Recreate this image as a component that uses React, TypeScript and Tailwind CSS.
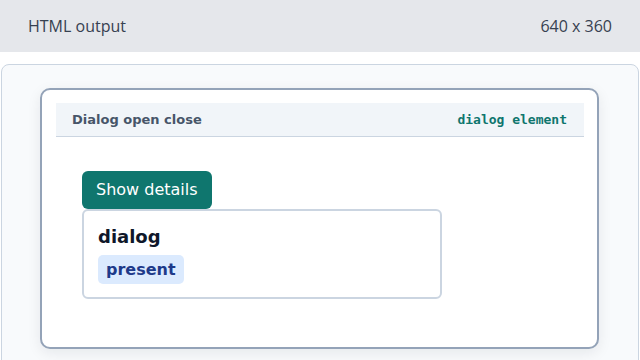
import React from "react";

export default function App() {
  return (
    <div className="w-[640px] h-[360px] overflow-hidden bg-white">
      <div className="h-[52px] bg-[#e5e7eb] flex items-center justify-between pl-[28px] pr-[28px] text-[16px] text-[#374151]" style={{ fontFamily: '"Open Sans", sans-serif' }}>
        <span>HTML output</span>
        <span>640 x 360</span>
      </div>
      <div className="mt-[12px] mx-[1px] h-[320px] rounded-t-[8px] border border-[#cbd5e1] bg-[#f8fafc] pt-[23px] pl-[38px] pr-[39px]">
        <div className="h-[261px] rounded-[10px] border-2 border-[#94a3b8] bg-white shadow-[0_4px_14px_rgba(15,23,42,0.08)] pt-[13px] pl-[14px] pr-[13px]" style={{ fontFamily: '"DejaVu Sans", sans-serif' }}>
          <div className="h-[34px] bg-[#f1f5f9] border-b border-[#cbd5e1] flex items-center justify-between pl-[16px] pr-[17px]">
            <span className="text-[13px] font-bold text-[#475569]">Dialog open close</span>
            <span className="text-[13px] font-bold text-[#0f766e]" style={{ fontFamily: '"DejaVu Sans Mono", monospace' }}>dialog element</span>
          </div>
          <div className="pt-[34px] pl-[26px]">
            <button className="h-[38px] px-[14px] rounded-[6px] bg-[#0f766e] text-white text-[16px] leading-none">Show details</button>
            <div className="w-[360px] h-[90px] rounded-[6px] border-2 border-[#cbd5e1] bg-white px-[14px] pt-[13px]">
              <div className="text-[18px] font-bold text-[#0f172a] leading-[26px]">dialog</div>
              <div className="mt-[5px] inline-flex h-[29px] items-center rounded-[5px] bg-[#dbeafe] px-[8px] text-[16px] font-bold text-[#1e3a8a]">present</div>
            </div>
          </div>
        </div>
      </div>
    </div>
  );
}
